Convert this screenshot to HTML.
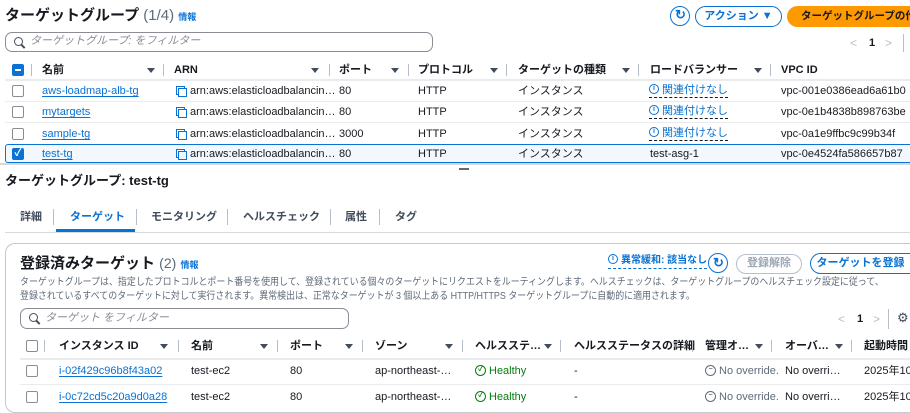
<!DOCTYPE html>
<html><head><meta charset="utf-8"><style>
*{margin:0;padding:0;box-sizing:border-box}
body{width:910px;height:409px;overflow:hidden;background:#fff;font-family:"Liberation Sans","Noto Sans CJK JP",sans-serif;color:#16191f;position:relative;font-size:11px}
.a{position:absolute;white-space:nowrap;line-height:14px}
.b{font-weight:bold}
.lk{color:#0972d3;text-decoration:underline;text-underline-offset:2px}
.dv{position:absolute;width:1px;height:12px;background:#b6bec9}
.tri{position:absolute;width:0;height:0;border-left:4px solid transparent;border-right:4px solid transparent;border-top:5px solid #414d5c}
.cb{position:absolute;width:12px;height:12px;border:1.5px solid #8c8c94;border-radius:2px;background:#fff}
.hl{position:absolute;height:1px;background:#e9ebed}
.btn{position:absolute;border:1.5px solid #0972d3;border-radius:12px;color:#0972d3;font-weight:bold;text-align:center;font-size:11px}
.ref{position:absolute;width:20px;height:20px;border:1.5px solid #0972d3;border-radius:50%}
.cp{position:absolute;width:9px;height:9px;border:1.5px solid #0972d3}
.info{display:inline-block;width:10px;height:10px;border:1.3px solid #0972d3;border-radius:50%;font-size:7px;line-height:8px;text-align:center;font-weight:bold;vertical-align:middle;margin-right:3px;position:relative;top:-1px}
.search{position:absolute;border:1.5px solid #8c8c94;border-radius:7px;color:#8c8c94;font-style:italic;padding-left:24px;font-size:11px}
.mag{position:absolute;left:8px;top:4px;width:9px;height:9px;border:1.5px solid #414d5c;border-radius:50%}
.mag:after{content:"";position:absolute;width:1.5px;height:5px;background:#414d5c;left:7px;top:6px;transform:rotate(-45deg)}
</style></head><body>

<div class="a b" style="left:5px;top:7px;font-size:15px;line-height:18px">ターゲットグループ <span style="font-weight:normal;color:#5f6b7a">(1/4)</span> <span style="color:#0972d3;font-size:9px">情報</span></div>

<div class="ref" style="left:670px;top:6px"></div><div class="a b" style="left:675px;top:8px;color:#0972d3;font-size:13px">↻</div>
<div class="btn" style="left:695px;top:6px;width:87px;height:21px;line-height:18px">アクション ▼</div>
<div class="a b" style="left:787px;top:6px;width:123px;height:21px;background:#ff9900;border-radius:12px 0 0 12px;line-height:21px;padding-left:14px;font-size:10.5px;overflow:hidden">ターゲットグループの作成</div>

<div class="search" style="left:5px;top:32px;width:428px;height:20px;line-height:17px"><div class="mag"></div>ターゲットグループ: をフィルター</div>
<div class="a" style="left:850px;top:36px;color:#b6bec9;font-size:12px">&lt;</div>
<div class="a b" style="left:869px;top:36px;font-size:11px">1</div>
<div class="a" style="left:885px;top:36px;color:#b6bec9;font-size:12px">&gt;</div>
<div class="dv" style="left:903px;top:34px;height:18px"></div>

<!-- header 1 -->
<div class="a" style="left:12px;top:64px;width:12px;height:12px;background:#0972d3;border-radius:2px"><div style="position:absolute;left:3px;top:5px;width:6px;height:2px;background:#fff"></div></div>
<div class="dv" style="left:31px;top:64px"></div>
<div class="a b" style="left:42px;top:63px">名前</div><div class="tri" style="left:147px;top:68px"></div><div class="dv" style="left:163px;top:64px"></div>
<div class="a b" style="left:174px;top:63px">ARN</div><div class="tri" style="left:311px;top:68px"></div><div class="dv" style="left:329px;top:64px"></div>
<div class="a b" style="left:339px;top:63px">ポート</div><div class="tri" style="left:391px;top:68px"></div><div class="dv" style="left:408px;top:64px"></div>
<div class="a b" style="left:418px;top:63px">プロトコル</div><div class="tri" style="left:490px;top:68px"></div><div class="dv" style="left:506px;top:64px"></div>
<div class="a b" style="left:518px;top:63px">ターゲットの種類</div><div class="tri" style="left:622px;top:68px"></div><div class="dv" style="left:638px;top:64px"></div>
<div class="a b" style="left:650px;top:63px">ロードバランサー</div><div class="tri" style="left:754px;top:68px"></div><div class="dv" style="left:770px;top:64px"></div>
<div class="a b" style="left:781px;top:63px">VPC ID</div>
<div class="hl" style="left:5px;top:79px;width:905px;height:2px;background:#e9ebed"></div>

<!-- rows -->
<div class="cb" style="left:12px;top:85px"></div>
<div class="a lk" style="left:42px;top:84px">aws-loadmap-alb-tg</div>
<div class="cp" style="left:176px;top:86px"></div><div class="cp" style="left:178px;top:88px;background:#fff"></div>
<div class="a" style="left:190px;top:84px">arn:aws:elasticloadbalancin…</div>
<div class="a" style="left:339px;top:84px">80</div><div class="a" style="left:418px;top:84px">HTTP</div><div class="a" style="left:518px;top:84px">インスタンス</div>
<div class="a" style="left:649px;top:83px;color:#0972d3;border-bottom:1px dashed #16191f"><span class="info">i</span>関連付けなし</div>
<div class="a" style="left:781px;top:84px">vpc-001e0386ead6a61b0</div>
<div class="hl" style="left:5px;top:101px;width:905px"></div>

<div class="cb" style="left:12px;top:106px"></div>
<div class="a lk" style="left:42px;top:105px">mytargets</div>
<div class="cp" style="left:176px;top:107px"></div><div class="cp" style="left:178px;top:109px;background:#fff"></div>
<div class="a" style="left:190px;top:105px">arn:aws:elasticloadbalancin…</div>
<div class="a" style="left:339px;top:105px">80</div><div class="a" style="left:418px;top:105px">HTTP</div><div class="a" style="left:518px;top:105px">インスタンス</div>
<div class="a" style="left:649px;top:104px;color:#0972d3;border-bottom:1px dashed #16191f"><span class="info">i</span>関連付けなし</div>
<div class="a" style="left:781px;top:105px">vpc-0e1b4838b898763be</div>
<div class="hl" style="left:5px;top:122px;width:905px"></div>

<div class="cb" style="left:12px;top:128px"></div>
<div class="a lk" style="left:42px;top:127px">sample-tg</div>
<div class="cp" style="left:176px;top:129px"></div><div class="cp" style="left:178px;top:131px;background:#fff"></div>
<div class="a" style="left:190px;top:127px">arn:aws:elasticloadbalancin…</div>
<div class="a" style="left:339px;top:127px">3000</div><div class="a" style="left:418px;top:127px">HTTP</div><div class="a" style="left:518px;top:127px">インスタンス</div>
<div class="a" style="left:649px;top:126px;color:#0972d3;border-bottom:1px dashed #16191f"><span class="info">i</span>関連付けなし</div>
<div class="a" style="left:781px;top:127px">vpc-0a1e9ffbc9c99b34f</div>

<div class="a" style="left:5px;top:144px;width:905px;height:19px;background:#f2f8fd;border:1px solid #0972d3;border-right:none;border-radius:3px 0 0 3px"></div>
<div class="a" style="left:12px;top:148px;width:12px;height:12px;background:#0972d3;border-radius:2px;color:#fff;font-size:10px;line-height:12px;text-align:center;font-weight:bold">✓</div>
<div class="a lk" style="left:42px;top:147px">test-tg</div>
<div class="cp" style="left:176px;top:149px"></div><div class="cp" style="left:178px;top:151px;background:#f2f8fd"></div>
<div class="a" style="left:190px;top:147px">arn:aws:elasticloadbalancin…</div>
<div class="a" style="left:339px;top:147px">80</div><div class="a" style="left:418px;top:147px">HTTP</div><div class="a" style="left:518px;top:147px">インスタンス</div>
<div class="a" style="left:650px;top:147px">test-asg-1</div>
<div class="a" style="left:781px;top:147px">vpc-0e4524fa586657b87</div>
<div class="hl" style="left:0;top:163px;width:910px;height:2px;background:#d5dbdb"></div>
<div class="a" style="left:459px;top:168px;width:10px;height:1.5px;background:#5f6b7a"></div>

<div class="a b" style="left:5px;top:173px;font-size:13px;line-height:16px">ターゲットグループ: test-tg</div>

<!-- tabs -->
<div class="a b" style="left:20px;top:210px;color:#414d5c">詳細</div><div class="dv" style="left:53px;top:209px;height:16px"></div>
<div class="a b" style="left:70px;top:210px;color:#0972d3">ターゲット</div>
<div class="a" style="left:56px;top:229px;width:79px;height:3px;background:#0972d3"></div>
<div class="dv" style="left:136px;top:209px;height:16px"></div>
<div class="a b" style="left:151px;top:210px;color:#414d5c">モニタリング</div><div class="dv" style="left:227px;top:209px;height:16px"></div>
<div class="a b" style="left:243px;top:210px;color:#414d5c">ヘルスチェック</div><div class="dv" style="left:330px;top:209px;height:16px"></div>
<div class="a b" style="left:345px;top:210px;color:#414d5c">属性</div><div class="dv" style="left:379px;top:209px;height:16px"></div>
<div class="a b" style="left:395px;top:210px;color:#414d5c">タグ</div>
<div class="hl" style="left:5px;top:232px;width:905px;height:1px;background:#d5dbdb"></div>

<!-- panel -->
<div class="a" style="left:5px;top:243px;width:905px;height:170px;border:1px solid #c6c6cd;border-right:none;border-radius:10px 0 0 10px"></div>

<div class="a b" style="left:20px;top:254px;font-size:15px;line-height:18px">登録済みターゲット <span style="font-weight:normal;color:#5f6b7a;font-size:14px">(2)</span> <span style="color:#0972d3;font-size:9px">情報</span></div>

<div class="a b" style="left:608px;top:254px;color:#0972d3;border-bottom:1px dashed #0972d3;font-size:10px"><span class="info">i</span>異常緩和: 該当なし</div>
<div class="ref" style="left:708px;top:253px"></div><div class="a b" style="left:713px;top:256px;color:#0972d3;font-size:13px">↻</div>
<div class="a b" style="left:736px;top:254px;width:66px;height:20px;border:1.5px solid #b6bec9;border-radius:11px;color:#9ba7b6;text-align:center;line-height:17px">登録解除</div>
<div class="btn" style="left:810px;top:253px;width:100px;height:21px;line-height:18px;border-right:none;border-radius:12px 0 0 12px">ターゲットを登録</div>

<div class="a" style="left:20px;top:276px;color:#5f6b7a;font-size:10px;line-height:14px;transform:scaleX(0.895);transform-origin:0 0">ターゲットグループは、指定したプロトコルとポート番号を使用して、登録されている個々のターゲットにリクエストをルーティングします。ヘルスチェックは、ターゲットグループのヘルスチェック設定に従って、<br>登録されているすべてのターゲットに対して実行されます。異常検出は、正常なターゲットが 3 個以上ある HTTP/HTTPS ターゲットグループに自動的に適用されます。</div>

<div class="search" style="left:20px;top:308px;width:329px;height:21px;line-height:18px"><div class="mag"></div>ターゲット をフィルター</div>
<div class="a" style="left:838px;top:312px;color:#b6bec9;font-size:12px">&lt;</div>
<div class="a b" style="left:857px;top:312px">1</div>
<div class="a" style="left:873px;top:312px;color:#b6bec9;font-size:12px">&gt;</div>
<div class="dv" style="left:888px;top:309px;height:20px"></div>
<div class="a" style="left:897px;top:311px;font-size:13px;color:#414d5c">⚙</div>

<!-- header 2 -->
<div class="cb" style="left:26px;top:340px"></div><div class="dv" style="left:44px;top:340px"></div>
<div class="a b" style="left:59px;top:339px">インスタンス ID</div><div class="tri" style="left:160px;top:344px"></div><div class="dv" style="left:178px;top:340px"></div>
<div class="a b" style="left:191px;top:339px">名前</div><div class="tri" style="left:260px;top:344px"></div><div class="dv" style="left:277px;top:340px"></div>
<div class="a b" style="left:290px;top:339px">ポート</div><div class="tri" style="left:345px;top:344px"></div><div class="dv" style="left:362px;top:340px"></div>
<div class="a b" style="left:375px;top:339px">ゾーン</div><div class="tri" style="left:445px;top:344px"></div><div class="dv" style="left:462px;top:340px"></div>
<div class="a b" style="left:475px;top:339px">ヘルスステ…</div><div class="tri" style="left:544px;top:344px"></div><div class="dv" style="left:560px;top:340px"></div>
<div class="a b" style="left:574px;top:339px">ヘルスステータスの詳細</div><div class="dv" style="left:692px;top:340px"></div>
<div class="a b" style="left:705px;top:339px">管理オ…</div><div class="tri" style="left:755px;top:344px"></div><div class="dv" style="left:771px;top:340px"></div>
<div class="a b" style="left:785px;top:339px">オーバ…</div><div class="tri" style="left:835px;top:344px"></div><div class="dv" style="left:851px;top:340px"></div>
<div class="a b" style="left:864px;top:339px">起動時間</div>
<div class="hl" style="left:20px;top:358px;width:890px;height:2px"></div>

<div class="cb" style="left:26px;top:365px"></div>
<div class="a lk" style="left:59px;top:364px">i-02f429c96b8f43a02</div>
<div class="a" style="left:191px;top:364px">test-ec2</div><div class="a" style="left:290px;top:364px">80</div><div class="a" style="left:375px;top:364px">ap-northeast-…</div>
<div class="a" style="left:475px;top:364px;color:#037f0c"><span class="info" style="border-color:#037f0c;width:11px;height:11px">✓</span>Healthy</div>
<div class="a" style="left:574px;top:364px">-</div>
<div class="a" style="left:705px;top:364px;color:#5f6b7a"><span class="info" style="border-color:#5f6b7a;width:11px;height:11px">−</span>No override.</div>
<div class="a" style="left:785px;top:364px">No overri…</div><div class="a" style="left:864px;top:364px">2025年10.</div>
<div class="hl" style="left:20px;top:384px;width:890px"></div>

<div class="cb" style="left:26px;top:391px"></div>
<div class="a lk" style="left:59px;top:390px">i-0c72cd5c20a9d0a28</div>
<div class="a" style="left:191px;top:390px">test-ec2</div><div class="a" style="left:290px;top:390px">80</div><div class="a" style="left:375px;top:390px">ap-northeast-…</div>
<div class="a" style="left:475px;top:390px;color:#037f0c"><span class="info" style="border-color:#037f0c;width:11px;height:11px">✓</span>Healthy</div>
<div class="a" style="left:574px;top:390px">-</div>
<div class="a" style="left:705px;top:390px;color:#5f6b7a"><span class="info" style="border-color:#5f6b7a;width:11px;height:11px">−</span>No override.</div>
<div class="a" style="left:785px;top:390px">No overri…</div><div class="a" style="left:864px;top:390px">2025年10.</div>
</body></html>
